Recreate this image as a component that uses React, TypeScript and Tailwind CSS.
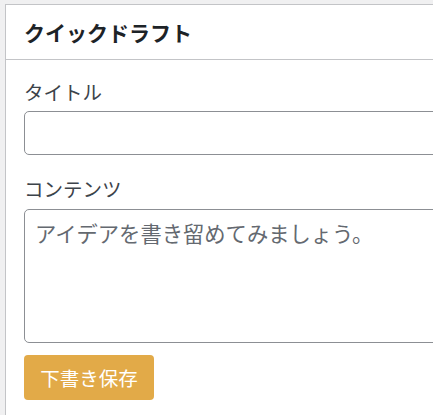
import React from "react";

export default function App() {
  const jp = { fontFamily: '"Noto Sans CJK JP", "Noto Sans", sans-serif' };
  return (
    <div className="h-[415px] w-[433px] overflow-hidden bg-[#f0f0f1] pl-[5px] pt-[4px]" style={jp}>
      <div className="w-[480px] h-[420px] border border-[#c3c4c7] bg-white">
        <div className="flex h-[55px] items-center border-b border-[#c3c4c7] pl-[18px]">
          <h2 className="text-[21px] font-bold leading-none text-[#1d2327]">クイックドラフト</h2>
        </div>
        <div className="pl-[18px] pt-[18px]">
          <label className="block text-[19.5px] leading-[28px] text-[#3c434a]">タイトル</label>
          <input
            type="text"
            className="mt-[5px] block h-[44px] w-[440px] rounded-[5px] border border-[#8c8f94] bg-white outline-none"
          />
          <label className="mt-[20px] block text-[19.5px] leading-[28px] text-[#3c434a]">コンテンツ</label>
          <textarea
            placeholder="アイデアを書き留めてみましょう。"
            className="mt-[6px] block h-[134px] w-[440px] resize-none rounded-[5px] border border-[#8c8f94] bg-white px-[10px] pt-[8px] text-[21.3px] leading-[30px] text-[#2c3338] outline-none placeholder:text-[#646970]"
          />
          <button className="mt-[12px] flex h-[45px] w-[130px] items-center justify-center rounded-[4px] bg-[#e2aa48] text-[19.5px] text-white">
            下書き保存
          </button>
        </div>
      </div>
    </div>
  );
}
